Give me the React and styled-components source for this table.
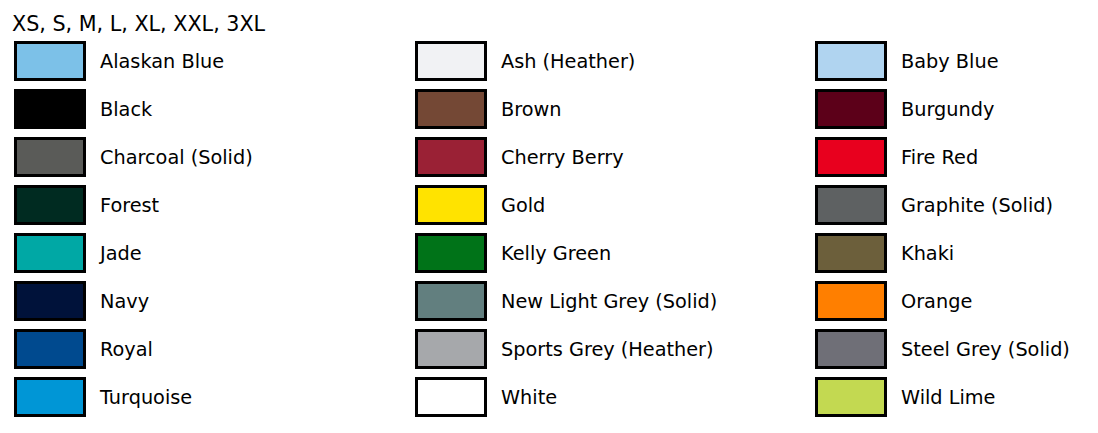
import React from "react";
import styled, { createGlobalStyle } from "styled-components";

const Global = createGlobalStyle`
  body { margin: 0; background: #fff; }
`;

const Page = styled.div`
  font-family: "DejaVu Sans", Verdana, sans-serif;
  color: #000;
  padding: 12px 0 0 12px;
`;

const Sizes = styled.div`
  font-size: 20.7px;
  line-height: 25px;
  margin-bottom: 4px;
`;

const Grid = styled.div`
  display: grid;
  grid-template-columns: 401px 400px 1fr;
  grid-auto-rows: 40px;
  row-gap: 8px;
  padding-left: 2px;
`;

const Item = styled.div`
  display: flex;
  align-items: center;
  gap: 14px;
`;

const Swatch = styled.div`
  box-sizing: border-box;
  width: 72px;
  height: 40px;
  border: 3px solid #000;
  background: ${(p) => p.$color};
  flex: none;
`;

const Label = styled.span`
  font-size: 19.3px;
  line-height: 22px;
  padding-top: 2px;
`;

const colors = [
  ["Alaskan Blue", "#7cc1e8"],
  ["Ash (Heather)", "#f1f2f4"],
  ["Baby Blue", "#b0d4f0"],
  ["Black", "#000000"],
  ["Brown", "#744835"],
  ["Burgundy", "#5c0019"],
  ["Charcoal (Solid)", "#5a5b58"],
  ["Cherry Berry", "#9a2135"],
  ["Fire Red", "#e8001e"],
  ["Forest", "#002b21"],
  ["Gold", "#ffe300"],
  ["Graphite (Solid)", "#5e6162"],
  ["Jade", "#00a8a5"],
  ["Kelly Green", "#007318"],
  ["Khaki", "#6c5f3b"],
  ["Navy", "#00123a"],
  ["New Light Grey (Solid)", "#627f7f"],
  ["Orange", "#ff7f00"],
  ["Royal", "#004a8f"],
  ["Sports Grey (Heather)", "#a6a8ab"],
  ["Steel Grey (Solid)", "#6f6f77"],
  ["Turquoise", "#0096d6"],
  ["White", "#ffffff"],
  ["Wild Lime", "#c3d951"],
];

export default function App() {
  return (
    <Page>
      <Global />
      <Sizes>XS, S, M, L, XL, XXL, 3XL</Sizes>
      <Grid>
        {colors.map(([name, c]) => (
          <Item key={name}>
            <Swatch $color={c} />
            <Label>{name}</Label>
          </Item>
        ))}
      </Grid>
    </Page>
  );
}
